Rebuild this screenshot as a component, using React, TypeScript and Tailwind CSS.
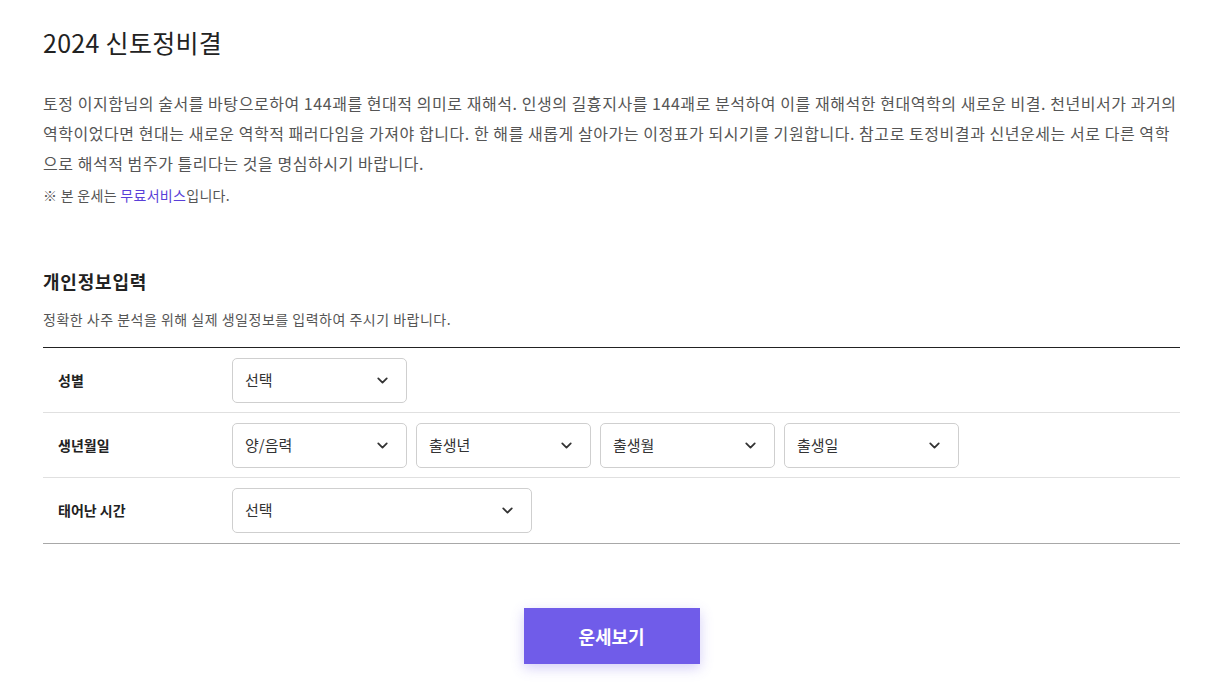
import { ChevronDown } from "lucide-react";

const font = { fontFamily: '"Noto Sans CJK KR", "Noto Sans", sans-serif' };

function Select({ label, width }: { label: string; width: string }) {
  return (
    <div
      className={`${width} h-[45px] flex items-center justify-between pl-[12px] pr-[15px] border border-[#cfcfcf] rounded-[5px] bg-white text-[15px] text-[#333]`}
    >
      <span>{label}</span>
      <ChevronDown size={17} strokeWidth={2.5} className="text-[#333]" />
    </div>
  );
}

function Row({ label, children, last }: { label: string; children: React.ReactNode; last?: boolean }) {
  return (
    <div className={`flex items-center h-[65px] ${last ? "" : "border-b border-[#e0e0e0]"}`}>
      <div className="w-[189px] pl-[15px] text-[14px] font-bold text-[#222]">{label}</div>
      <div className="flex gap-[9px]">{children}</div>
    </div>
  );
}

export default function App() {
  return (
    <div className="min-h-[685px] bg-white" style={font}>
      <div className="w-[1137px] ml-[43px] pt-[26px]">
        <h1 className="text-[25px] leading-[32px] text-[#222] font-normal tracking-[0.3px]">2024 신토정비결</h1>
        <p className="mt-[30px] text-[16px] leading-[30px] text-[#555] tracking-[0.55px]">
          토정 이지함님의 술서를 바탕으로하여 144괘를 현대적 의미로 재해석. 인생의 길흉지사를 144괘로 분석하여 이를 재해석한 현대역학의 새로운 비결. 천년비서가 과거의
          <br />
          역학이었다면 현대는 새로운 역학적 패러다임을 가져야 합니다. 한 해를 새롭게 살아가는 이정표가 되시기를 기원합니다. 참고로 토정비결과 신년운세는 서로 다른 역학
          <br />
          으로 해석적 범주가 틀리다는 것을 명심하시기 바랍니다.
        </p>
        <p className="mt-[7px] text-[14px] leading-[20px] text-[#555] tracking-[0.3px]">
          ※ 본 운세는 <span className="text-[#5a3fd8]">무료서비스</span>입니다.
        </p>

        <h2 className="mt-[63px] text-[18px] leading-[26px] font-bold text-[#222] tracking-[0.8px]">개인정보입력</h2>
        <p className="mt-[15px] text-[14px] leading-[20px] text-[#555] tracking-[0.5px]">
          정확한 사주 분석을 위해 실제 생일정보를 입력하여 주시기 바랍니다.
        </p>

        <div className="mt-[18px] border-t border-[#222] border-b border-b-[#a8a8a8]">
          <Row label="성별">
            <Select label="선택" width="w-[175px]" />
          </Row>
          <Row label="생년월일">
            <Select label="양/음력" width="w-[175px]" />
            <Select label="출생년" width="w-[175px]" />
            <Select label="출생월" width="w-[175px]" />
            <Select label="출생일" width="w-[175px]" />
          </Row>
          <Row label="태어난 시간" last>
            <Select label="선택" width="w-[300px]" />
          </Row>
        </div>

        <div className="flex justify-center mt-[64px]">
          <button
            type="button"
            className="w-[176px] h-[56px] bg-[#705ce9] text-white text-[18px] font-bold shadow-[0_4px_12px_rgba(112,92,233,0.3)]"
          >
            운세보기
          </button>
        </div>
      </div>
    </div>
  );
}
